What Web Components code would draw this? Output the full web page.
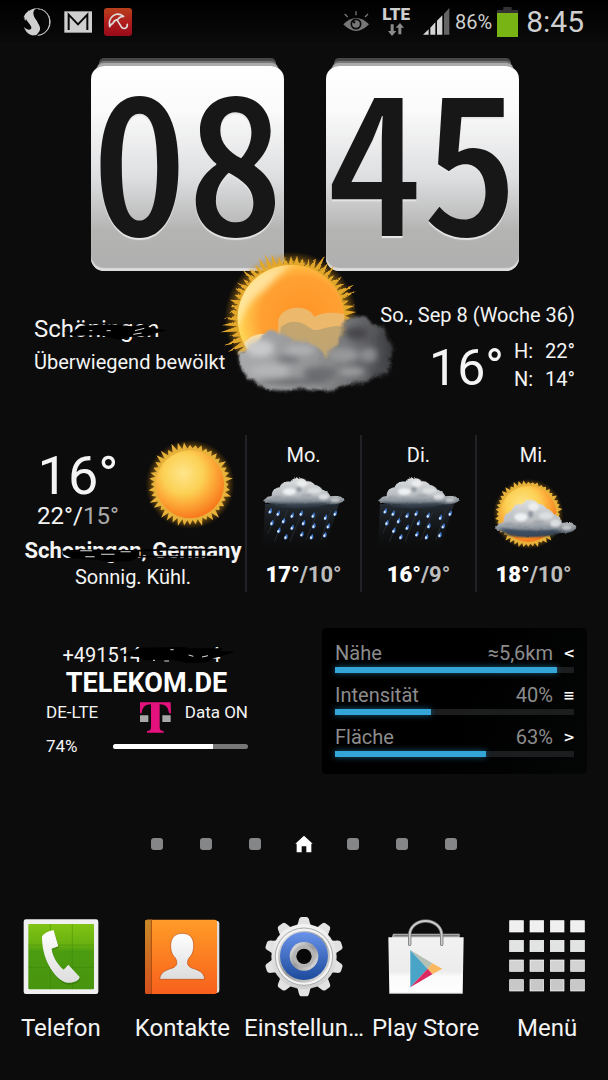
<!DOCTYPE html>
<html lang="de">
<head>
<meta charset="utf-8">
<meta name="viewport" content="width=device-width, initial-scale=1">
<title>Startbildschirm</title>
<style>
  body { margin: 0; background: #0c0c0c; color: #f4f4f4; font-family: Roboto, "Noto Sans", sans-serif; }
</style>
</head>
<body>
<home-screen></home-screen>

<script>
/* Base: renders html() into an open shadow root */
class Part extends HTMLElement {
  connectedCallback() {
    if (this.shadowRoot) return;
    this.attachShadow({ mode: 'open' });
    this.shadowRoot.innerHTML = '<style>*{box-sizing:border-box}svg{display:block}</style>' + this.html();
  }
}

/* Jagged ring of sun rays around (cx, cy) */
function rays(cx, cy, inner, outer, count) {
  const pts = [];
  for (let i = 0; i < count * 2; i++) {
    const a = Math.PI * i / count;
    const wobble = (Math.sin(i * 12.9) * 43758.5) % 1;
    const r = i % 2 ? inner + Math.abs(wobble) * 4 : inner + (outer - inner) * (0.35 + 0.65 * Math.abs(wobble));
    pts.push((cx + r * Math.cos(a)).toFixed(1) + ',' + (cy + r * Math.sin(a)).toFixed(1));
  }
  return pts.join(' ');
}

const rough = (id, freq, scale, blur) => `
  <filter id="${id}" x="-10%" y="-10%" width="120%" height="120%">
    <feGaussianBlur in="SourceGraphic" stdDeviation="${blur}" result="b"/>
    <feTurbulence type="fractalNoise" baseFrequency="${freq}" numOctaves="3" seed="4" result="n"/>
    <feDisplacementMap in="b" in2="n" scale="${scale}" xChannelSelector="R" yChannelSelector="G"/>
  </filter>`;

customElements.define('home-screen', class extends Part {
  html() { return `
    <style>
      :host { display: block; overflow: hidden; }
      flip-clock { margin-top: 16px; }
      week-forecast { margin: 42px 18px 0 15px; }
      .widgets { display: grid; grid-template-columns: 1fr 1fr; gap: 31px; margin: 36px 21px 0 26px; }
      page-dots { margin-top: 60px; }
      app-dock { margin: 61px 0 37px; }
    </style>
    <status-bar></status-bar>
    <main>
      <flip-clock hours="08" minutes="45"></flip-clock>
      <current-weather></current-weather>
      <week-forecast></week-forecast>
      <div class="widgets"><carrier-info></carrier-info><storm-panel></storm-panel></div>
      <page-dots></page-dots>
    </main>
    <app-dock></app-dock>`; }
});

customElements.define('status-bar', class extends Part {
  html() { return `
    <style>
      :host { display: flex; justify-content: space-between; align-items: flex-start; height: 42px; padding: 6px 24px 0 22px;
              background: linear-gradient(#000, #0a0a0a); color: #cfcfcf; }
      .left, .right { display: flex; align-items: center; height: 32px; }
      .left { gap: 12px; }
      .right { gap: 5px; }
      .net { display: flex; flex-direction: column; align-items: center; align-self: flex-start; gap: 1px; margin: 0 7px; font-size: 17px; line-height: 16px; font-weight: 900; }
      .pct { font-size: 20px; line-height: 32px; }
      time { font-size: 30px; line-height: 32px; margin-left: 3px; }
    </style>
    <div class="left">
      <svg width="30" height="30" viewBox="67 19 90 90"><path d="M114 24a40 40 0 0 1 6 79" fill="none" stroke="#cfcfcf" stroke-width="3"/><path d="M119 24C97 22 98 43 108 56c11 15 15 29 2 47-7 2-18 2-26-6-5-5-10-12-11-18 8 9 20 11 22 4 2-8-11-17-16-28-1 2-2 4-2 6-3-4-3-9-2-13l-3 4c2-12 10-17 17-24v3c8-7 18-10 30-7z" fill="#cfcfcf"/><path d="M111 104c18-5 25-20 21-36-2-8-13-20-13-31 0-5 2-9 6-11 18 9 25 20 25 37 0 22-17 40-39 41z" fill="#080808"/><path d="M125 26c16 7 25 20 25 38 0 22-15 38-36 40" fill="none" stroke="#cfcfcf" stroke-width="3"/><path d="M100 27c-8 22 8 32 18 46 6 10 4 20-8 29l-14 2c16-13 10-26 2-36-10-12-16-24 2-41z" fill="#cfcfcf"/></svg>
      <svg width="28" height="22" viewBox="191 30 84 66"><path d="M192 31h83v64h-83z" fill="#cfcfcf"/><path d="M205 87V41l28 29 28-29v46" fill="none" stroke="#080808" stroke-width="6"/></svg>
      <svg width="28" height="28" viewBox="312 21 84 84"><defs><linearGradient id="a" x2="0" y2="1"><stop stop-color="#b8401c"/><stop offset=".5" stop-color="#b01c1c"/><stop offset="1" stop-color="#980a1a"/></linearGradient></defs><rect x="312" y="21" width="84" height="84" rx="9" fill="url(#a)"/><path d="M329 77C323 48 348 30 371 46q-12 0-18 10-11 1-14 11-7 2-10 10zM352 58l13 21q9 8 16-2l1-7" fill="none" stroke="#ddd" stroke-width="5" stroke-linejoin="round" stroke-linecap="round"/></svg>
    </div>
    <div class="right">
      <svg width="27" height="22" viewBox="117 32 81 66"><path d="M118 72q39-38 77 0-39 40-77 0z" fill="#777"/><circle cx="156" cy="71" r="14" fill="none" stroke="#0a0a0a" stroke-width="5"/><path d="M153 68l-7-7" stroke="#0a0a0a" stroke-width="6"/><path d="M122 41l9 9M156 33v12M192 41l-9 9" stroke="#777" stroke-width="4"/></svg>
      <span class="net">LTE<svg width="16" height="14" viewBox="0 0 48 42"><path d="M8 4h9v20h8L12 39 0 24h8zM31 34h9V14h8L36 0 23 14h8z" fill="#8a8a8a"/></svg></span>
      <svg width="28" height="28" viewBox="357 26 84 84"><path d="M360 106l17-16v16zM382 85l15-16v37h-15zM402 64l16-16v58h-16z" fill="#d4d4d4"/><path d="M423 43l16-17v80h-16z" fill="#646464"/></svg>
      <span class="pct">86%</span>
      <svg width="21" height="30" viewBox="576 18 63 90"><path d="M595 18h25v9h19v9h-63v-9h19z" fill="#333"/><path d="M576 36h63v72h-63z" fill="#78b414"/></svg>
      <time>8:45</time>
    </div>`; }
});

customElements.define('flip-clock', class extends Part {
  html() { return `
    <style>
      :host { display: flex; justify-content: center; gap: 42px; padding: 8px 0 0 2px; }
      .card { width: 193px; height: 205px; border-radius: 13px; text-align: center; color: #171717; white-space: nowrap;
        font: 500 192px/172px "Noto Sans CJK JP", sans-serif; font-feature-settings: "hwid";
        background: linear-gradient(#fff, #fafafa 22%, #dedfe1 54%, #b4b4b3 80%, #afafaf);
        text-shadow: 0 2px 1px #e6e6e6;
        box-shadow: inset 0 -3px 1px #ddd, 0 -8px 0 -5px #aaa, 0 -12px 0 -7px #777, 0 -16px 0 -8px #484848; }
    </style>
    <div class="card">${this.getAttribute('hours')}</div>
    <div class="card">${this.getAttribute('minutes')}</div>`; }
});

customElements.define('cloudy-sun', class extends Part {
  html() { return `
    <style>:host { display: block; width: 200px; height: 160px; }</style>
    <svg width="200" height="160" viewBox="0 0 600 480" aria-hidden="true">
      <defs>
        <radialGradient id="s" cx=".6" cy=".5" r=".62"><stop stop-color="#ff9426"/><stop offset=".62" stop-color="#ffa033"/><stop offset=".86" stop-color="#ffc64a"/><stop offset="1" stop-color="#ffe060"/></radialGradient>
        <radialGradient id="g"><stop offset=".72" stop-color="#e0a020"/><stop offset="1" stop-color="#c08010" stop-opacity="0"/></radialGradient>
        <linearGradient id="c" x2="1"><stop stop-color="#aaabad"/><stop offset=".5" stop-color="#929395"/><stop offset=".8" stop-color="#636467"/><stop offset="1" stop-color="#36373b"/></linearGradient>
        ${rough('r', 0.025, 26, 4)}${rough('q', 0.05, 8, 2)}
        <filter id="b" x="-30%" y="-30%" width="160%" height="160%"><feGaussianBlur stdDeviation="10"/></filter>
        <clipPath id="k"><circle cx="243" cy="235" r="160"/></clipPath>
      </defs>
      <circle cx="243" cy="235" r="200" fill="url(#g)"/>
      <polygon points="${rays(243, 235, 160, 216, 64)}" fill="#e3a72c" filter="url(#q)"/>
      <circle cx="243" cy="235" r="160" fill="url(#s)"/>
      <g clip-path="url(#k)">
        <path d="M70 240C80 120 170 70 250 72c-40 20-60 60-110 95-20 15-40 50-60 100z" fill="#ffeab0" opacity=".8" filter="url(#b)"/>
        <path d="M205 240c10-45 90-50 108-10 25-15 65-15 100-5v170H200z" fill="#eabb72" opacity=".9"/>
        <path d="M212 262c30-25 60-20 85 0 20 16 35 5 60 0 20-5 35-5 60 0v150H212z" fill="#b8a070" opacity=".8"/>
        <path d="M90 330c20-45 55-50 80-48l50 20v70H90z" fill="#fbe2ae" opacity=".9"/>
      </g>
      <g filter="url(#r)">
        <path d="M402 245c40-35 70-15 85 10 40 0 50 30 50 50 30 20 10 45 0 55 10 30-20 50-40 45-20 25-60 30-90 28-40 25-90 25-130 10-50 15-110 10-140-15-35-15-50-50-52-95 30 20 40-30 80-50 20-15 40-10 60 5 20 15 50 20 70 15 30 20 40 40 60 50 20-40 50-60 47-108z" fill="url(#c)"/>
      </g>
      <g filter="url(#b)">
        <ellipse cx="150" cy="325" rx="42" ry="26" fill="#c8c9cb"/><ellipse cx="270" cy="330" rx="46" ry="16" fill="#b0b1b3"/>
        <ellipse cx="180" cy="392" rx="58" ry="22" fill="#b4b5b6"/><ellipse cx="235" cy="358" rx="36" ry="12" fill="#77787c"/>
        <ellipse cx="400" cy="345" rx="46" ry="22" fill="#97989a"/><ellipse cx="475" cy="345" rx="26" ry="22" fill="#8c8d90"/>
        <ellipse cx="330" cy="400" rx="50" ry="20" fill="#6c6d70"/><ellipse cx="440" cy="280" rx="34" ry="20" fill="#46474b"/>
        <ellipse cx="425" cy="395" rx="40" ry="12" fill="#a0a1a3"/><ellipse cx="250" cy="425" rx="110" ry="9" fill="#66676a"/>
      </g>
    </svg>`; }
});

customElements.define('current-weather', class extends Part {
  html() { return `
    <style>
      :host { display: flex; justify-content: space-between; align-items: flex-start; position: relative; padding: 32px 33px 0 34px; }
      cloudy-sun { position: absolute; left: calc(50% - 94px); top: -31px; }
      .place, .today { position: relative; }
      .place { padding-top: 12px; }
      .town { position: relative; font-size: 24px; line-height: 28px; margin-bottom: 7px; }
      .town svg { position: absolute; left: 0; top: 0; }
      .line { font-size: 20px; line-height: 24px; }
      .now { display: flex; justify-content: flex-end; align-items: flex-end; gap: 10px; margin-top: 10px; }
      .big { font-size: 50px; line-height: 50px; }
      dl { display: grid; grid-template-columns: auto auto; column-gap: 12px; margin: 0; font-size: 20px; line-height: 28px; }
      dd { margin: 0; }
    </style>
    <cloudy-sun></cloudy-sun>
    <div class="place">
      <div class="town">Schöningen
        <svg width="134" height="28" viewBox="42 45 402 84" aria-hidden="true"><path d="M152 98L185 77l90-4 60 6 60-8-10 10 55 10-30 8-22 8-60 4-30 8-60-14-78 3-30-10z"/><path d="M208 92h9M260 92h12M345 92l28-7M340 103l25-4" stroke="#ddd" stroke-width="3"/></svg>
      </div>
      <div class="line">Überwiegend bewölkt</div>
    </div>
    <div class="today">
      <div class="line">So., Sep 8 (Woche 36)</div>
      <div class="now"><span class="big">16°</span>
        <dl><dt>H:</dt><dd>22°</dd><dt>N:</dt><dd>14°</dd></dl></div>
    </div>`; }
});

/* Cumulus cloud, moved by (dx, dy) and sy times as tall */
const CLOUD = (dx, dy, sy, id) => `
  <g transform="translate(${dx} ${dy}) scale(1 ${sy})">
    <g filter="url(#${id}r)">
      <path d="M66 212l14-12 12-2c0-20 15-25 24-26 4-14 20-20 32-17 8-10 18-12 22-8 6-4 20-4 26 8 14-4 22 6 26 10 14 2 18 10 22 14 14 4 20 10 24 20l20-2c10 0 14 4 23 14-8 10-30 14-50 12-60 10-110 10-140 0-20 0-45-4-55-11z" fill="url(#${id}c)"/>
    </g>
    <g filter="url(#${id}b)">
      <ellipse cx="145" cy="185" rx="20" ry="10" fill="#eef0f2"/><ellipse cx="183" cy="160" rx="16" ry="10" fill="#eceded"/>
      <ellipse cx="174" cy="178" rx="8" ry="8" fill="#929aa2"/><ellipse cx="198" cy="198" rx="18" ry="5" fill="#a0a6ac"/>
      <ellipse cx="220" cy="182" rx="22" ry="9" fill="#dcdee0"/><ellipse cx="248" cy="200" rx="16" ry="9" fill="#dcdee0"/>
      <ellipse cx="108" cy="203" rx="14" ry="5" fill="#98a0a8"/><ellipse cx="282" cy="210" rx="14" ry="6" fill="#c4c6c8"/>
      <path d="M80 217q50 9 100 6t90-5l-30 11q-80 8-130 0z" fill="#303c48"/>
    </g>
  </g>`;
const CLOUD_DEFS = id => `
  <linearGradient id="${id}c" x2="0" y2="1"><stop stop-color="#dcdee0"/><stop offset=".6" stop-color="#b8bcc0"/><stop offset=".8" stop-color="#848c94"/><stop offset="1" stop-color="#2b3742"/></linearGradient>
  ${rough(id + 'r', 0.08, 7, 0.8)}
  <filter id="${id}b" x="-20%" y="-20%" width="140%" height="140%"><feGaussianBlur stdDeviation="3"/></filter>`;

customElements.define('weather-icon', class extends Part {
  html() {
    const kind = this.getAttribute('kind');
    const sunDefs = `<radialGradient id="s" cx=".4" cy=".34" r=".7"><stop stop-color="#ffe58a"/><stop offset=".42" stop-color="#fbd155"/><stop offset=".6" stop-color="#fdb33e"/><stop offset=".95" stop-color="#f8791c"/></radialGradient>
      <radialGradient id="g"><stop offset=".72" stop-color="#c8901c"/><stop offset="1" stop-color="#7a5008" stop-opacity="0"/></radialGradient>`;
    const sun = (x, y, r, o) => `<circle cx="${x}" cy="${y}" r="${o}" fill="url(#g)"/><polygon points="${rays(x, y, r + 4, o, 44)}" fill="#e8b23a"/><circle cx="${x}" cy="${y}" r="${r}" fill="url(#s)"/>`;
    let size, box, art;
    if (kind === 'sun') {
      size = [90, 102]; box = '389 15 270 306';
      art = `<defs>${sunDefs}</defs>` + sun(524, 163, 102, 134);
    } else if (kind === 'rain') {
      size = [88, 80]; box = '57 126 264 240';
      const drops = [[87,243],[111,250],[153,256],[180,250],[216,256],[282,250],[92,278],[127,272],[187,278],[253,262],[113,301],[153,292],[218,287],[261,288],[134,320],[182,312],[211,320],[251,314]];
      art = `<defs>${CLOUD_DEFS('w')}<linearGradient id="m" x2="0" y2="1"><stop stop-color="#242b32"/><stop offset="1" stop-color="#141618" stop-opacity=".1"/></linearGradient></defs>
        <path d="M72 222h222l-40 125H66z" fill="url(#m)"/>
        <path d="M140 240l-40 95M185 240l-38 95M230 245l-35 85M270 240l-30 90M115 240l-35 70" stroke="#30363c" stroke-width="2"/>
        ${CLOUD(0, 0, 1, 'w')}
        ${drops.map(([x, y]) => `<path d="M${x + 4} ${y - 9}q4 9 0 15-5 5-9 0-1-5 9-15z" fill="#3f78d0"/><ellipse cx="${x - 1}" cy="${y + 3}" rx="3" ry="4" fill="#dfeaf8"/>`).join('')}`;
    } else {
      size = [88, 80]; box = '750 126 264 240';
      art = `<defs>${sunDefs}${CLOUD_DEFS('w')}</defs>` + sun(865, 252, 84, 106) +
        CLOUD(698, 30, 1.25, 'w') + `<path d="M780 294q80 14 180 6-40 18-84 18-66 4-96-24z" fill="#3b4c60" filter="url(#wb)"/>`;
    }
    return `<style>:host { display: block; }</style>
      <svg width="${size[0]}" height="${size[1]}" viewBox="${box}" aria-hidden="true">${art}</svg>`;
  }
});

customElements.define('forecast-day', class extends Part {
  html() { return `
    <style>
      :host { display: flex; flex-direction: column; align-items: center; padding-top: 8px; border-left: 2px solid #202225; }
      .day { font-size: 20px; line-height: 24px; }
      weather-icon { margin: 5px 0 9px; }
      .temp { font-size: 22px; line-height: 28px; font-weight: 700; color: #bdbdbd; }
      b { color: #fff; }
    </style>
    <span class="day"><slot></slot></span>
    <weather-icon kind="${this.getAttribute('kind')}"></weather-icon>
    <span class="temp"><b>${this.getAttribute('high')}°</b>/${this.getAttribute('low')}°</span>`; }
});

customElements.define('week-forecast', class extends Part {
  html() { return `
    <style>
      :host { display: grid; grid-template-columns: 2fr 1fr 1fr 1fr; height: 157px; }
      .today { display: flex; flex-direction: column; align-items: center; white-space: nowrap; }
      .row { display: flex; align-items: flex-start; align-self: flex-start; }
      .temps { width: 126px; margin-right: 4px; padding-top: 15px; text-align: center; }
      .big { font-size: 54px; line-height: 52px; }
      .range { font-size: 24px; line-height: 28px; color: #aaa; }
      .range b { font-weight: 400; color: #f4f4f4; }
      .town, .sky { margin-left: 6px; line-height: 28px; }
      .town { position: relative; font-size: 22px; font-weight: 700; }
      .town svg { position: absolute; left: 0; top: 0; width: 100%; height: 28px; }
      .sky { font-size: 20px; line-height: 24px; }
    </style>
    <div class="today">
      <div class="row">
        <div class="temps"><div class="big">16°</div><div class="range"><b>22°/</b>15°</div></div>
        <weather-icon kind="sun"></weather-icon>
      </div>
      <div class="town">Schoningen, Germany
        <svg viewBox="33 321 645 84" preserveAspectRatio="none" aria-hidden="true"><path d="M146 362l60-4 170 3v20l-26 12-70 4-25-8-80-4-26-12z"/><path d="M200 368l260-9h150M375 380h255l-60 6" fill="none" stroke="#000" stroke-width="5"/><path d="M200 362h35M262 373h40M320 365h30M215 380h28" stroke="#ddd" stroke-width="3"/></svg>
      </div>
      <div class="sky">Sonnig. Kühl.</div>
    </div>
    <forecast-day kind="rain" high="17" low="10">Mo.</forecast-day>
    <forecast-day kind="rain" high="16" low="9">Di.</forecast-day>
    <forecast-day kind="partly" high="18" low="10">Mi.</forecast-day>`; }
});

customElements.define('carrier-info', class extends Part {
  html() { return `
    <style>
      :host { display: block; padding: 15px 24px 0 0; text-align: center; white-space: nowrap; }
      .phone { padding-right: 10px; font-size: 20px; line-height: 24px; }
      .gap { display: inline-block; width: 68px; position: relative; }
      .gap svg { position: absolute; left: -24px; top: -19px; }
      .name { font-size: 27px; line-height: 32px; font-weight: 700; color: #fff; margin-bottom: 3px; }
      .row { display: flex; justify-content: space-between; padding: 0 19px 0 20px; font-size: 17px; line-height: 20px; }
      .row svg { margin: 0 14px 0 auto; }
      .level { align-items: center; margin-top: 3px; }
      progress { appearance: none; width: 135px; height: 5px; border: 0; border-radius: 3px; overflow: hidden; background: #777; }
      progress::-webkit-progress-bar { background: #777; }
      progress::-webkit-progress-value { background: #fff; }
    </style>
    <div class="phone">+491514<span class="gap"><svg width="124" height="24" viewBox="290 24 372 72" aria-hidden="true"><path d="M300 62l58-24 130-2 20 4 100 0-10 8 45 2-35 12-28 8-20 12-60 2-40-10-100 2-5-10z"/><path d="M398 76h6M432 78h14M450 44h10M505 60l14 4M545 66l18-4" stroke="#ddd" stroke-width="3"/></svg></span>4</div>
    <div class="name">TELEKOM.DE</div>
    <div class="row"><span>DE-LTE</span>
      <svg width="31" height="31" viewBox="360 202 93 93" aria-label="Telekom"><path d="M360 203h92l1 33h-6c-2-18-10-27-28-27v68c0 9 4 12 12 12v5h-50v-5c8 0 12-3 12-12v-68c-18 0-26 9-28 27h-5z" fill="#e5127d"/><path d="M360 242h25v20h-25zM427 242h25v20h-25z" fill="#a8a8a8"/></svg>
      <span>Data ON</span></div>
    <div class="row level"><label for="bat">74%</label><progress id="bat" max="100" value="74"></progress></div>`; }
});

customElements.define('storm-row', class extends Part {
  html() {
    const v = this.getAttribute('value');
    return `
    <style>
      :host { display: grid; grid-template-columns: 1fr auto 10px; column-gap: 11px; row-gap: 2px; font-size: 20px; line-height: 24px; color: #8c8c8c; }
      b { color: #fff; display: flex; justify-content: center; font-family: "DejaVu Sans", sans-serif; font-size: 14px; }
      progress { grid-column: 1 / -1; appearance: none; display: block; width: 100%; height: 6px; border: 0; background: #1b1d1f; }
      progress::-webkit-progress-bar { background: #1b1d1f; }
      progress::-webkit-progress-value { background: #33a5d6; box-shadow: 0 0 6px #1a5c7c; }
    </style>
    <label for="p"><slot></slot></label><span>${this.getAttribute('text')}</span><b>${this.getAttribute('sign')}</b>
    <progress id="p" max="100" value="${v}"></progress>`; }
});

customElements.define('storm-panel', class extends Part {
  html() { return `
    <style>
      :host { display: flex; flex-direction: column; gap: 10px; height: 146px; padding: 13px; border-radius: 4px; background: linear-gradient(110deg, #000 50%, #040505); }
    </style>
    <storm-row value="93" text="≈5,6km" sign="&lt;">Nähe</storm-row>
    <storm-row value="40" text="40%" sign="≡">Intensität</storm-row>
    <storm-row value="63" text="63%" sign="&gt;">Fläche</storm-row>`; }
});

customElements.define('page-dots', class extends Part {
  html() {
    const dot = n => `<button aria-label="Seite ${n}"><i></i></button>`;
    return `
    <style>
      :host { display: flex; justify-content: center; }
      button { width: 49px; height: 20px; padding: 0; border: 0; background: none; display: grid; place-items: center; }
      i { width: 12px; height: 12px; border-radius: 3px; background: #858688; }
    </style>
    ${dot(1)}${dot(2)}${dot(3)}
    <button aria-label="Startseite"><svg width="18" height="18" viewBox="855 28 54 54"><path d="M882 30l26 24h-4v26h-15V62h-14v18h-15V54h-4z" fill="#fff"/></svg></button>
    ${dot(5)}${dot(6)}${dot(7)}`; }
});

customElements.define('dock-app', class extends Part {
  html() { return `
    <style>
      :host { display: block; min-width: 0; }
      a { display: flex; flex-direction: column; align-items: center; gap: 15px; color: inherit; text-decoration: none; }
      span { font-size: 24px; line-height: 28px; white-space: nowrap; }
    </style>
    <a href="#"><slot name="icon"></slot><span><slot></slot></span></a>`; }
});

/* Settings gear outline: ten rounded teeth */
function gear(cx, cy) {
  let out = '';
  for (let i = 0; i < 10; i++)
    out += `<path d="M-26-88q8-6 10-20 2-11 9-11H7q7 0 9 11 2 14 10 20z" transform="translate(${cx} ${cy}) rotate(${i * 36})"/>`;
  return out;
}

customElements.define('app-dock', class extends Part {
  html() {
    let cells = '';
    for (let r = 0; r < 4; r++) for (let c = 0; c < 4; c++)
      cells += `<rect x="${480 + c * 61}" y="${287 + r * 59}" width="41" height="34" fill="${['#f0f0f0', '#e2e3e3', '#d3d3d4', '#c8c8c9'][r]}" stroke="#fff" stroke-width="2"/>`;
    return `
    <style>:host { display: grid; grid-template-columns: repeat(5, 1fr); }</style>
    <dock-app><svg slot="icon" width="84" height="84" viewBox="26 270 252 252"><defs><linearGradient id="p" x2="0" y2="1"><stop stop-color="#80c414"/><stop offset=".32" stop-color="#68b010"/><stop offset=".42" stop-color="#4c9c10"/><stop offset="1" stop-color="#48940e"/></linearGradient><linearGradient id="pw" x2="0" y2="1"><stop stop-color="#fff"/><stop offset="1" stop-color="#ddd"/></linearGradient></defs><rect x="40" y="283" width="224" height="224" rx="7" fill="#f0f0f0"/><rect x="54" y="297" width="197" height="196" rx="3" fill="url(#p)"/><path d="M120 297v196M186 297v196M54 360h197M54 427h197" stroke="#2f7808" stroke-width="2" opacity=".5"/><path d="M130 316l14 48-20 7c2 24 20 50 36 63l14-15 34 37c0 10-20 20-38 19-30-6-75-60-75-140 4-8 20-18 35-19z" fill="#286808" opacity=".5" transform="translate(2 4)"/><path d="M130 316l14 48-20 7c2 24 20 50 36 63l14-15 34 37c0 10-20 20-38 17-30-6-75-60-75-138 4-8 20-18 35-19z" fill="url(#pw)"/></svg>Telefon</dock-app>
    <dock-app><svg slot="icon" width="84" height="84" viewBox="391 270 252 252"><defs><linearGradient id="o" x2="0" y2="1"><stop stop-color="#ff9c28"/><stop offset="1" stop-color="#f8601c"/></linearGradient><linearGradient id="o2" x2="0" y2="1"><stop stop-color="#c88a28"/><stop offset="1" stop-color="#d4501c"/></linearGradient><linearGradient id="ow" x2="0" y2="1"><stop stop-color="#fff"/><stop offset="1" stop-color="#dcdcdc"/></linearGradient></defs><rect x="560" y="287" width="69" height="217" rx="9" fill="#dcdcdc"/><rect x="406" y="284" width="216" height="223" rx="7" fill="url(#o)"/><path d="M413 284h13v223h-13q-7 0-7-7V291q0-7 7-7z" fill="url(#o2)"/><path d="M425 284v223" stroke="#a84a14" stroke-width="3"/><path d="M518 325c22 0 34 14 34 36 0 19-5 29-14 38-8 14-5 24 8 30 22 7 37 12 39 34H450c2-22 17-27 39-34 13-6 16-16 8-30-9-9-14-19-14-38 0-22 13-36 35-36z" fill="url(#ow)" stroke="#b84a10" stroke-width="2"/></svg>Kontakte</dock-app>
    <dock-app><svg slot="icon" width="84" height="84" viewBox="756 270 252 252"><defs><linearGradient id="e" x2="0" y2="1"><stop stop-color="#f4f4f4"/><stop offset="1" stop-color="#cfcfcf"/></linearGradient><linearGradient id="eb" x2="0" y2="1"><stop stop-color="#6a92ea"/><stop offset="1" stop-color="#1c4a9c"/></linearGradient><linearGradient id="er" x2="1" y2="1"><stop stop-color="#f4f4f4"/><stop offset=".5" stop-color="#999"/><stop offset="1" stop-color="#f0f0f0"/></linearGradient></defs><g fill="#e2e2e2">${gear(882, 395)}</g><circle cx="882" cy="395" r="98" fill="url(#e)"/><circle cx="882" cy="395" r="86" fill="#f4f4f4" stroke="#aaa" stroke-width="3"/><circle cx="882" cy="395" r="78" fill="url(#er)"/><circle cx="882" cy="393" r="72" fill="url(#eb)"/><circle cx="882" cy="394" r="43" fill="url(#er)"/><circle cx="882" cy="394" r="33" fill="#b4b4b4"/><circle cx="882" cy="394" r="23" fill="#080808"/></svg>Einstellun…</dock-app>
    <dock-app><svg slot="icon" width="84" height="84" viewBox="101 270 252 252"><defs><linearGradient id="y" x2="0" y2="1"><stop stop-color="#f2f2f2"/><stop offset=".6" stop-color="#ececec"/><stop offset=".7" stop-color="#fafafa"/><stop offset="1" stop-color="#fff"/></linearGradient></defs><path d="M128 326h200v14H124z" fill="#aaa"/><path d="M132 332h192" stroke="#777" stroke-width="4"/><path d="M114 337h226l-3 168H117z" fill="url(#y)"/><path d="M117 505h220" stroke="#bbb" stroke-width="3"/><path d="M178 358v-28a48 42 0 0 1 96 0v28" fill="none" stroke="#666" stroke-width="10" stroke-linecap="round"/><path d="M178 358v-28a48 42 0 0 1 96 0v28" fill="none" stroke="#ccc" stroke-width="6" stroke-linecap="round"/><path d="M180 375v112l52-56z" fill="#4aa4c8"/><path d="M180 375l66 40-14 16z" fill="#b4c0b4"/><path d="M246 415l30 16-30 17-14-17z" fill="#fcb860"/><path d="M180 487l66-39-14-17z" fill="#dc2a60"/></svg>Play Store</dock-app>
    <dock-app><svg slot="icon" width="84" height="84" viewBox="466 270 252 252">${cells}</svg>Menü</dock-app>`; }
});
</script>
</body>
</html>
